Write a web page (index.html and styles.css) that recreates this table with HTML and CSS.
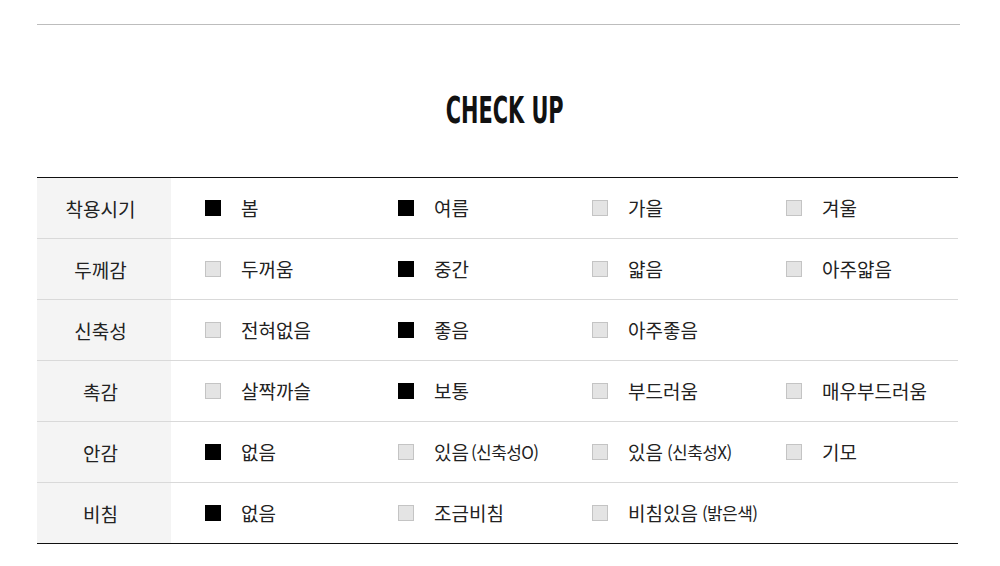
FILE: index.html
```html
<!DOCTYPE html>
<html lang="ko">
<head>
<meta charset="utf-8">
<title>CHECK UP</title>
<link rel="stylesheet" href="styles.css">
</head>
<body>
<div class="page">
  <div class="top-line"></div>
  <h2 class="title"><span>CHECK UP</span></h2>
  <table class="check">
    <tr>
      <th>착용시기</th>
      <td><div class="opts">
        <div class="opt"><i class="box on"></i>봄</div>
        <div class="opt"><i class="box on"></i>여름</div>
        <div class="opt"><i class="box"></i>가을</div>
        <div class="opt"><i class="box"></i>겨울</div>
      </div></td>
    </tr>
    <tr>
      <th>두께감</th>
      <td><div class="opts">
        <div class="opt"><i class="box"></i>두꺼움</div>
        <div class="opt"><i class="box on"></i>중간</div>
        <div class="opt"><i class="box"></i>얇음</div>
        <div class="opt"><i class="box"></i>아주얇음</div>
      </div></td>
    </tr>
    <tr>
      <th>신축성</th>
      <td><div class="opts">
        <div class="opt"><i class="box"></i>전혀없음</div>
        <div class="opt"><i class="box on"></i>좋음</div>
        <div class="opt"><i class="box"></i>아주좋음</div>
      </div></td>
    </tr>
    <tr>
      <th>촉감</th>
      <td><div class="opts">
        <div class="opt"><i class="box"></i>살짝까슬</div>
        <div class="opt"><i class="box on"></i>보통</div>
        <div class="opt"><i class="box"></i>부드러움</div>
        <div class="opt"><i class="box"></i>매우부드러움</div>
      </div></td>
    </tr>
    <tr>
      <th>안감</th>
      <td><div class="opts">
        <div class="opt"><i class="box on"></i>없음</div>
        <div class="opt"><i class="box"></i>있음<small class="tight">(신축성O)</small></div>
        <div class="opt"><i class="box"></i>있음<small>(신축성X)</small></div>
        <div class="opt"><i class="box"></i>기모</div>
      </div></td>
    </tr>
    <tr>
      <th>비침</th>
      <td><div class="opts">
        <div class="opt"><i class="box on"></i>없음</div>
        <div class="opt"><i class="box"></i>조금비침</div>
        <div class="opt"><i class="box"></i>비침있음<small>(밝은색)</small></div>
      </div></td>
    </tr>
  </table>
</div>
</body>
</html>
```
FILE: styles.css
```css
* { box-sizing: border-box; }
html, body { margin: 0; padding: 0; background: #fff; }
body {
  font-family: "Noto Sans CJK KR", "Noto Sans", sans-serif;
  color: #222;
}
.page {
  padding: 24px 40px 0 37px;
}
.top-line {
  border-top: 1px solid #bdbdbd;
}
.title {
  margin: 65px 0 47px;
  height: 40px;
  line-height: 40px;
  text-align: center;
  font-family: "DejaVu Sans Condensed", "Liberation Sans", sans-serif;
  font-weight: 700;
  font-size: 38px;
  color: #111;
  padding-left: 12px;
}
.title span {
  display: inline-block;
  transform: scaleX(0.61);
}
.check {
  width: 921px;
  border-collapse: collapse;
  border-top: 1px solid #111;
  border-bottom: 1px solid #111;
}
.check tr + tr th,
.check tr + tr td {
  border-top: 1px solid #d9d9d9;
}
.check th {
  width: 134px;
  height: 61px;
  padding: 0 7px 0 0;
  background: #f4f4f4;
  font-weight: 400;
  font-size: 19px;
  text-align: center;
  color: #222;
}
.check td {
  padding: 0 0 0 34px;
  height: 61px;
}
.opts {
  display: grid;
  grid-template-columns: 193px 194px 194px 1fr;
  align-items: center;
}
.opt {
  display: flex;
  align-items: center;
  font-size: 19px;
  line-height: 24px;
  white-space: nowrap;
}
.box {
  display: block;
  width: 16px;
  height: 16px;
  margin-right: 20px;
  background: #e4e4e4;
  border: 1px solid #c4c4c4;
  flex: none;
}
.box.on {
  background: #000;
  border-color: #000;
}
.opt small {
  font-size: 17px;
  letter-spacing: -0.6px;
  margin-left: 4px;
}
.opt small.tight {
  margin-left: 2px;
}
```
